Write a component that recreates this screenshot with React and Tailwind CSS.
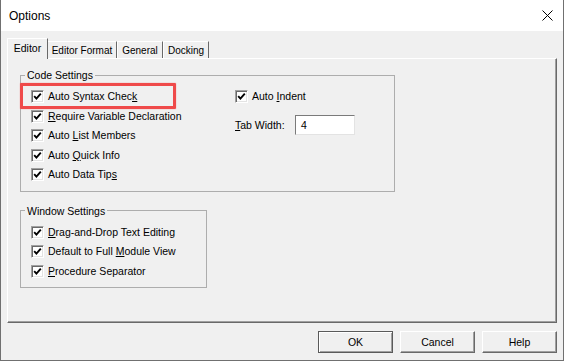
import React from 'react';

function Box() {
  return (
    <span className="w-[13px] h-[13px] shrink-0 bg-white border border-t-[#a0a0a0] border-l-[#a0a0a0] border-r-white border-b-white shadow-[inset_1px_1px_0_#696969,inset_-1px_-1px_0_#e3e3e3] flex items-center justify-center">
      <svg width="9" height="9" viewBox="0 0 9 9">
        <path d="M1.2 4.2 L3.4 6.6 L7.8 1.6" fill="none" stroke="#000" strokeWidth="1.9" />
      </svg>
    </span>
  );
}

function Check({ children }) {
  return (
    <div className="flex items-center h-[19.5px]">
      <Box />
      <span className="ml-[4px]">{children}</span>
    </div>
  );
}

function Btn({ children, primary }) {
  return (
    <button
      className={`w-[75px] h-[22px] flex items-center justify-center bg-[#f0f0f0] ${
        primary
          ? 'border border-[#5a5a5a] shadow-[inset_1px_1px_0_#fff,inset_-1px_-1px_0_#a0a0a0]'
          : 'border border-t-white border-l-white border-r-[#696969] border-b-[#696969] shadow-[inset_-1px_-1px_0_#a0a0a0]'
      }`}
    >
      {children}
    </button>
  );
}

export default function App() {
  return (
    <div className="w-[564px] h-[361px] flex flex-col bg-[#f0f0f0] border-l border-r border-b border-[#707070] font-['Liberation_Sans',Arial,sans-serif] text-[10.5px] leading-[13px] text-black overflow-hidden">
      {/* title bar */}
      <div className="h-[31px] shrink-0 bg-white flex items-center justify-between pl-[8px] pr-[10px]">
        <span className="text-[12px] leading-none">Options</span>
        <svg width="11" height="11" viewBox="0 0 11 11">
          <path d="M0.5 0.5 L10.5 10.5 M10.5 0.5 L0.5 10.5" stroke="#000" strokeWidth="1" />
        </svg>
      </div>

      <div className="flex-1 flex flex-col px-[6px]">
        {/* tabs */}
        <div className="h-[27px] shrink-0 flex items-end text-[10.5px]">
          <div className="relative z-10 -mb-px w-[41px] h-[21px] pb-[1px] flex items-center justify-center bg-[#f0f0f0] border-l border-t border-white border-r border-r-[#696969]">
            Editor
          </div>
          <div className="w-[69px] h-[17px] flex items-center justify-center border-t border-white border-r border-r-[#696969] text-[10px]">
            Editor Format
          </div>
          <div className="w-[46px] h-[17px] flex items-center justify-center border-l border-t border-white border-r border-r-[#696969] text-[10px]">
            General
          </div>
          <div className="w-[46px] h-[17px] flex items-center justify-center border-l border-t border-white border-r border-r-[#696969] text-[10px]">
            Docking
          </div>
        </div>

        {/* panel */}
        <div className="relative h-[265px] shrink-0 border-t border-l border-white border-r border-b border-r-[#696969] border-b-[#696969] shadow-[inset_-1px_-1px_0_#a0a0a0] pl-[12px]">
          <fieldset className="mt-[10px] w-[375px] border border-[#adadad] px-[4px] pb-[6px]">
            <legend className="px-[2px] leading-[12px]">Code Settings</legend>
            <div className="flex pt-[6px] pl-[6px]">
              <div className="w-[204px]">
                <Check>Auto Syntax Chec<u>k</u></Check>
                <Check><u>R</u>equire Variable Declaration</Check>
                <Check>Auto <u>L</u>ist Members</Check>
                <Check>Auto <u>Q</u>uick Info</Check>
                <Check>Auto Data Tip<u>s</u></Check>
              </div>
              <div>
                <Check>Auto <u>I</u>ndent</Check>
                <div className="flex items-center h-[20px] mt-[8.5px]">
                  <span className="w-[60px]"><u>T</u>ab Width:</span>
                  <div className="w-[60px] h-[20px] bg-white border border-t-[#7a7a7a] border-l-[#7a7a7a] border-r-[#e3e3e3] border-b-[#e3e3e3] flex items-center pl-[5px]">
                    4
                  </div>
                </div>
              </div>
            </div>
          </fieldset>

          <fieldset className="mt-[13px] w-[187px] border border-[#adadad] px-[4px] pb-[6px]">
            <legend className="px-[2px] leading-[12px]">Window Settings</legend>
            <div className="pt-[6px] pl-[6px]">
              <Check><u>D</u>rag-and-Drop Text Editing</Check>
              <Check>Default to Full <u>M</u>odule View</Check>
              <Check><u>P</u>rocedure Separator</Check>
            </div>
          </fieldset>

          {/* highlight annotation */}
          <div className="absolute left-[12px] top-[24px] w-[156px] h-[26px] border-[3px] border-[#ef4a4a] rounded-[1px] shadow-[0_0_1px_#ef4a4a]" />
        </div>

        {/* buttons */}
        <div className="flex justify-end gap-[7px] mt-[8px]">
          <Btn primary>OK</Btn>
          <Btn>Cancel</Btn>
          <Btn>Help</Btn>
        </div>
      </div>
    </div>
  );
}
